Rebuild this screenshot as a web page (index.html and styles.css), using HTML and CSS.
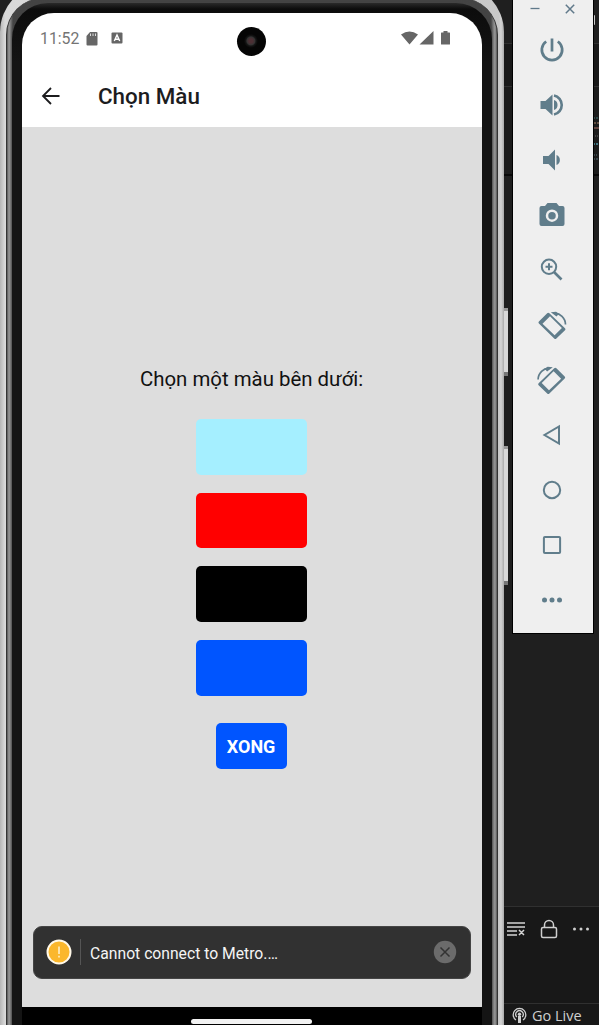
FILE: index.html
```html
<!DOCTYPE html>
<html lang="vi">
<head>
<meta charset="utf-8">
<title>Chọn Màu</title>
<link rel="stylesheet" href="styles.css">
</head>
<body>
<div class="desktop">
  <div class="editor">
    <div class="tabs"></div>
    <div class="crumbs"></div>
    <div class="code-top"></div>
    <div class="code"></div>
    <div class="panel">
      <svg width="20" height="18" viewBox="0 0 20 18" fill="none" stroke="#d4d4d4" stroke-width="1.5"><path d="M1 3h18M1 7h18M1 11h10M1 15h10M13 10l5 5M18 10l-5 5"/></svg>
      <svg width="18" height="20" viewBox="0 0 18 20" fill="none" stroke="#cfcfcf" stroke-width="1.5"><rect x="1.5" y="8.5" width="15" height="10" rx="1.5"/><path d="M4.5 8.500V6a4.500 4.500 0 0 1 9 0v2.500"/></svg>
      <svg width="18" height="4" viewBox="0 0 18 4" fill="#cfcfcf"><circle cx="2.500" cy="2" r="1.500"/><circle cx="9" cy="2" r="1.500"/><circle cx="15.500" cy="2" r="1.500"/></svg>
    </div>
    <div class="status">
      <svg width="15" height="17" viewBox="0 0 15 17" fill="none" stroke="#d0d0d0" stroke-width="1.300"><path d="M4 13a6.300 6.300 0 1 1 7 0M4.800 10a3.700 3.700 0 1 1 5.400 0"/><circle cx="7.500" cy="7.200" r="1.700" fill="#d0d0d0" stroke="none"/><path d="M7.500 9v7" stroke-width="3"/></svg>
      <span>Go Live</span>
    </div>
  </div>
  <i class="sliver sliver-a"></i>
  <i class="sliver sliver-b"></i>
  <svg class="code-bits" width="7" height="160" viewBox="0 0 7 160" fill="none"><path d="M0 15.500h1.500v9H0" stroke="#ccc"/><path d="M0 118h6" stroke="#3f7774" stroke-dasharray="2 1"/><path d="M0 123h6" stroke="#a88268" stroke-dasharray="3 1"/><path d="M1 128h6" stroke="#a56a60"/><path d="M0 136h6" stroke="#666" stroke-dasharray="1 1"/><path d="M0 144h7" stroke="#417581" stroke-width="2" stroke-dasharray="2 1"/><path d="M0 155h4M0 159h7" stroke="#54717b" stroke-dasharray="2 1"/></svg>

  <div class="phone">
    <div class="rim">
      <div class="bezel">
        <div class="screen">
          <div class="statusbar">
            <span class="clock">11:52</span>
            <svg class="sd" width="12" height="15" viewBox="0 0 12 15"><path fill="#666" d="M4 1h6.500q1 0 1 1v11.500q0 1-1 1h-9q-1 0-1-1V5z"/><path d="M4.500 2.500v2.500M7 2.500v2.500M9.500 2.500v2.500" stroke="#ddd"/></svg>
            <svg class="abox" width="12" height="12" viewBox="0 0 12 12"><rect x=".5" y=".5" width="11" height="11" rx="1" fill="#666"/><path d="M3.300 9 6 3l2.700 6M4.500 7.200h3" fill="none" stroke="#fff" stroke-width="1.400"/></svg>
            <span class="grow"></span>
            <svg width="50" height="16" viewBox="0 0 50 16" fill="#666"><path d="M0 4.500Q8.500-1.500 17 4.500L8.500 14.500zM18.500 14.500 32.500 1v13.500zM40.500 2.500h2V1h4v1.500h2q.5 0 .5.500v11q0 .5-.5.500h-8q-.5 0-.5-.5V3q0-.5.500-.5z"/></svg>
            <i class="camera"></i>
          </div>
          <header class="appbar">
            <svg width="20" height="18" viewBox="0 0 20 18" fill="none" stroke="#1c1c1e" stroke-width="1.800"><path d="M18.500 9H2M10 1 2 9l8 8"/></svg>
            <h1>Chọn Màu</h1>
          </header>
          <main class="content">
            <p class="prompt">Chọn một màu bên dưới:</p>
            <div class="swatches">
              <button class="swatch sky"></button>
              <button class="swatch red"></button>
              <button class="swatch black"></button>
              <button class="swatch blue"></button>
            </div>
            <button class="done">XONG</button>
            <div class="toast">
              <svg width="26" height="26" viewBox="0 0 26 26"><circle cx="13" cy="13" r="11.500" fill="#fbb72c" stroke="#fff8e8" stroke-width="2"/><path d="M13 7.500v7.500M13 16.700v1.800" stroke="#fff3d2" stroke-width="1.500"/></svg>
              <i class="rule"></i>
              <span class="message">Cannot connect to Metro.…</span>
              <svg width="24" height="24" viewBox="0 0 24 24"><circle cx="12" cy="12" r="11.200" fill="#6b6b6b"/><path d="m7.500 7.500 9 9m0-9-9 9" stroke="#333" stroke-width="1.500"/></svg>
            </div>
          </main>
        </div>
        <div class="navbar"><i></i></div>
      </div>
    </div>
  </div>

  <aside class="tools">
    <div class="window-buttons">
      <svg width="10" height="10" viewBox="0 0 10 10" stroke="#60798a" stroke-width="1.300"><path d="M.5 4.500h9"/></svg>
      <svg width="10" height="10" viewBox="0 0 10 10" stroke="#60798a" stroke-width="1.500"><path d="m.8.8 8.400 8.400m0-8.400L.8 9.200"/></svg>
    </div>
    <div class="tool"><svg viewBox="0 0 28 28"><path class="line" stroke-width="2.700" d="M14 2.500v13M8.200 5.500a10.200 10.200 0 1 0 11.600 0"/></svg></div>
    <div class="tool"><svg viewBox="0 0 28 28"><path d="M2.500 10h5L14.500 3.500v21L7.500 18h-5zM16 9a5.300 5.300 0 0 1 0 10z"/><path class="line" stroke-width="2.600" d="M16 4.500a9.700 9.700 0 0 1 0 19"/></svg></div>
    <div class="tool"><svg viewBox="0 0 28 28"><path d="M5 10h5.500L17 3.500v21L10.500 18H5zM18.500 9a5.400 5.400 0 0 1 0 10z"/></svg></div>
    <div class="tool"><svg viewBox="0 0 28 28"><path d="M9.500 2h9L21 5h3.500q2 0 2 2v16q0 2-2 2h-21q-2 0-2-2V7q0-2 2-2H7z"/><circle cx="14" cy="14.700" r="5" fill="#607d8b" stroke="#efefef" stroke-width="2.500"/></svg></div>
    <div class="tool"><svg viewBox="0 0 28 28"><path class="line" stroke-width="2" d="M18.200 10.800a7.200 7.200 0 1 1-14.400 0 7.200 7.200 0 0 1 14.400 0zM11 7.300v7M7.500 10.800h7"/><path class="line" stroke-width="2.700" d="m16 16 7.500 7.500"/></svg></div>
    <div class="tool"><svg viewBox="0 0 28 28"><g id="rotate"><path fill-rule="evenodd" d="M9.200 2.300q1-1 2.200 0L27 17.300q1 1 0 2l-8.600 8.300q-1.100 1-2.200 0L.9 12.500q-1-1 0-2zM12 5.200l-7.500 7.500L16.600 24.300l7.300-7.300z"/><path class="line" stroke-width="1.700" d="M16 2.500c6-.8 11.500 4.500 11.500 11"/><path d="M12.800 1.200 18 .8l3 2-2.500 2.700z"/></g></svg></div>
    <div class="tool"><svg viewBox="0 0 28 28"><use href="#rotate" transform="matrix(-1 0 0 1 27.6 0)"/></svg></div>
    <div class="tool"><svg viewBox="0 0 28 28"><path class="line" stroke-width="2" d="M21 5.500v17L6.500 14z"/></svg></div>
    <div class="tool"><svg viewBox="0 0 28 28"><circle class="line" stroke-width="2" cx="14" cy="14" r="8.200"/></svg></div>
    <div class="tool"><svg viewBox="0 0 28 28"><rect class="line" stroke-width="2" x="5.900" y="5.900" width="16.200" height="16.200" rx="1"/></svg></div>
    <div class="tool"><svg viewBox="0 0 28 28"><circle cx="6.500" cy="14" r="2.500"/><circle cx="14" cy="14" r="2.500"/><circle cx="21.500" cy="14" r="2.500"/></svg></div>
  </aside>
</div>
</body>
</html>
```

FILE: styles.css
```css
* { box-sizing: border-box; }
body { margin: 0; background: #1f1f1f; font-family: Roboto, sans-serif; }
svg { display: block; flex: none; overflow: visible; }
.desktop { position: relative; width: 599px; height: 1025px; overflow: hidden; }

/* editor window behind the emulator */
.editor { display: flex; flex-direction: column; height: 1025px; }
.tabs { height: 44px; background: #1f1f1f; border-bottom: 1px solid #303030; }
.crumbs { height: 43px; background: #191919; border-bottom: 1px solid #303030; }
.code-top { height: 89px; background: #1c1c1c; border-bottom: 2px solid #080808; }
.code { flex: 1; }
.panel { height: 97px; padding: 13px 9px 0 506px; display: flex; justify-content: space-between; background: #181818; border-top: 1px solid #303030; }
.panel svg:nth-child(2) { margin-top: -1px; }
.panel svg:nth-child(3) { margin-top: 7px; }
.status { height: 22px; padding: 3px 0 0 512px; display: flex; gap: 5px; background: #181818; border-top: 1px solid #303030; color: #d0d0d0; font: 14.5px/18px "Open Sans", "Noto Sans", sans-serif; white-space: nowrap; }
.status span { height: 18px; }
.sliver { position: absolute; left: 504px; width: 4px; background: #d8d8d8; border-top: 3px solid #999; border-bottom: 4px solid #777; }
.sliver-a { top: 308px; height: 68px; }
.sliver-b { top: 446px; height: 139px; }
.code-bits { position: absolute; left: 593px; top: 0; }

/* emulated phone */
.phone { position: absolute; left: 0; top: -16px; width: 504px; height: 1100px; padding: 14px 6px 0; border-radius: 48px 48px 0 0; background: linear-gradient(90deg, #b5b5b5, #d9d9d9 5px, #c8c8c8 499px, #d5d5d5 501px, #aaa); }
.rim { height: 1086px; padding: 5px 5px 0; border-radius: 37px 37px 0 0; border-left: 1px solid #333; border-right: 1px solid #333; background: linear-gradient(90deg, #555, #999 2px, #707070 4px, #444 6px, #444 484px, #777 486px, #999 488px, #555); }
.bezel { height: 1081px; padding: 10px 10px 0; border-radius: 36px 36px 0 0; background: linear-gradient(#2a2a2a, #0c0c0c 6px, #141414 60px); box-shadow: 0 -3px 2px #444; }
.screen { position: relative; height: 994px; display: flex; flex-direction: column; overflow: hidden; border-radius: 32px 32px 1px 1px; background: #fff; }
.statusbar { height: 50px; padding: 0 31px 0 18px; display: flex; align-items: center; color: #747474; }
.clock { font-size: 15.8px; width: 39px; }
.sd { margin-left: 7px; }
.abox { margin-left: 13px; }
.grow { flex: 1; }
.camera { position: absolute; left: 215px; top: 14px; width: 29px; height: 29px; border-radius: 50%; background: radial-gradient(circle at 48% 48%, #4d3035 0 2px, #343434 4px, #161616 5px, #050505 7px); }
.appbar { height: 64px; padding: 1px 18px 0 19px; display: flex; align-items: center; gap: 37px; }
h1 { margin: 0; font-size: 22.4px; line-height: 30px; font-weight: 500; color: #1c1c1e; }
.content { flex: 1; padding: 237px 11.2px 0 10.4px; display: flex; flex-direction: column; align-items: center; background: #ddd; }
.prompt { margin: 0; font-size: 20.4px; line-height: 30px; color: #111; white-space: nowrap; }
.swatches { margin-top: 25px; display: grid; gap: 18px; }
button { border: 0; padding: 0; }
.swatch { width: 111.5px; height: 55.7px; border-radius: 5px; }
.sky { background: #a5efff; }
.red { background: #f00; }
.black { background: #000; }
.blue { background: #0055ff; }
.done { margin-top: 27px; width: 71.5px; height: 46px; padding: 2px 1px 0 0; border-radius: 5px; background: #0055ff; color: #fff; font: bold 18px/44px Roboto, sans-serif; }
.toast { width: 438px; height: 53px; margin-top: 157px; padding: 0 12.5px; display: flex; align-items: center; border-radius: 9px; border: 1px solid #454545; background: #313131; color: #f5f5f5; }
.rule { width: 1px; height: 26px; margin: 0 9px 0 8px; background: #555; }
.message { flex: 1; font-size: 15.7px; line-height: 20px; margin-top: 3px; }
.navbar { height: 60px; padding: 12px 1px 0 0; background: #000; }
.navbar i { display: block; width: 121px; height: 5px; margin: 0 auto; border-radius: 3px; background: #f2f2f2; }

/* emulator toolbar */
.tools { position: absolute; left: 512px; top: -1px; width: 82px; height: 635px; border: 1px solid #000; background: #efefef; }
.window-buttons { height: 22px; padding: 4px 18px 0 17px; display: flex; justify-content: space-between; }
.tool { height: 55px; display: flex; align-items: center; justify-content: center; padding-right: 2px; }
.tool svg { width: 28px; height: 28px; fill: #607d8b; }
.line { fill: none; stroke: #607d8b; }
```
